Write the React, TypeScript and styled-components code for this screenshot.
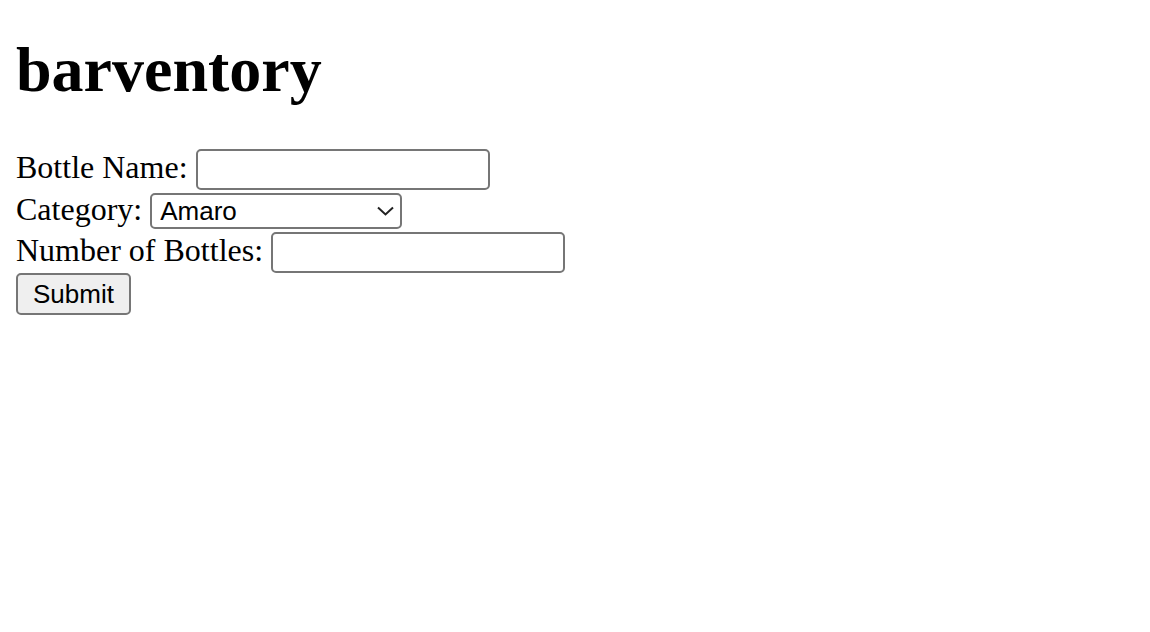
import React from "react";
import styled, { createGlobalStyle } from "styled-components";

const GlobalStyle = createGlobalStyle`
  html, body {
    margin: 0;
    padding: 0;
    background: #ffffff;
  }
  body {
    font-family: "Liberation Serif", "Times New Roman", serif;
    color: #000;
  }
`;

// Page wrapper
const Page = styled.main`
  padding: 34px 16px 16px;
`;

// Title
const Title = styled.h1`
  margin: 0 0 43px;
  font-size: 64px;
  line-height: 71px;
  font-weight: 700;
`;

// Form stack
const Form = styled.form`
  display: flex;
  flex-direction: column;
  align-items: flex-start;
`;

// One line of the form
const Row = styled.div<{ $h: number }>`
  display: flex;
  align-items: center;
  gap: 8px;
  height: ${(p) => p.$h}px;
`;

const Label = styled.label`
  font-size: 32px;
  line-height: 35px;
  margin-bottom: 3px;
  white-space: nowrap;
`;

const TextInput = styled.input`
  box-sizing: border-box;
  width: 294px;
  height: 41px;
  border: 2px solid #767676;
  border-radius: 5px;
  padding: 2px 6px;
  font-family: "Liberation Sans", Arial, sans-serif;
  font-size: 26px;
  background: #fff;
`;

const SelectWrap = styled.div`
  position: relative;
  display: inline-flex;
`;

const Select = styled.select`
  box-sizing: border-box;
  appearance: none;
  width: 252px;
  height: 36px;
  border: 2px solid #767676;
  border-radius: 5px;
  padding: 0 36px 0 8px;
  font-family: "Liberation Sans", Arial, sans-serif;
  font-size: 26px;
  color: #000;
  background: #fff;
`;

const Chevron = styled.svg`
  position: absolute;
  right: 8px;
  top: 13px;
  pointer-events: none;
`;

const SubmitButton = styled.button`
  box-sizing: border-box;
  width: 115px;
  height: 42px;
  border: 2px solid #767676;
  border-radius: 5px;
  background: #efefef;
  font-family: "Liberation Sans", Arial, sans-serif;
  font-size: 26px;
  color: #000;
  padding: 0;
`;

const categories = ["Amaro", "Bourbon", "Gin", "Rum", "Tequila", "Vodka", "Whiskey"];

export default function App() {
  return (
    <>
      <GlobalStyle />
      <Page>
        <Title>barventory</Title>
        <Form onSubmit={(e) => e.preventDefault()}>
          <Row $h={42}>
            <Label htmlFor="name">Bottle Name:</Label>
            <TextInput id="name" type="text" />
          </Row>
          <Row $h={41}>
            <Label htmlFor="category">Category:</Label>
            <SelectWrap>
              <Select id="category" defaultValue="Amaro">
                {categories.map((c) => (
                  <option key={c} value={c}>
                    {c}
                  </option>
                ))}
              </Select>
              <Chevron width="17" height="10" viewBox="0 0 17 10">
                <path d="M1 1.5 L8.5 8.5 L16 1.5" fill="none" stroke="#222" strokeWidth="2" />
              </Chevron>
            </SelectWrap>
          </Row>
          <Row $h={42}>
            <Label htmlFor="count">Number of Bottles:</Label>
            <TextInput id="count" type="number" />
          </Row>
          <Row $h={42}>
            <SubmitButton type="submit">Submit</SubmitButton>
          </Row>
        </Form>
      </Page>
    </>
  );
}
